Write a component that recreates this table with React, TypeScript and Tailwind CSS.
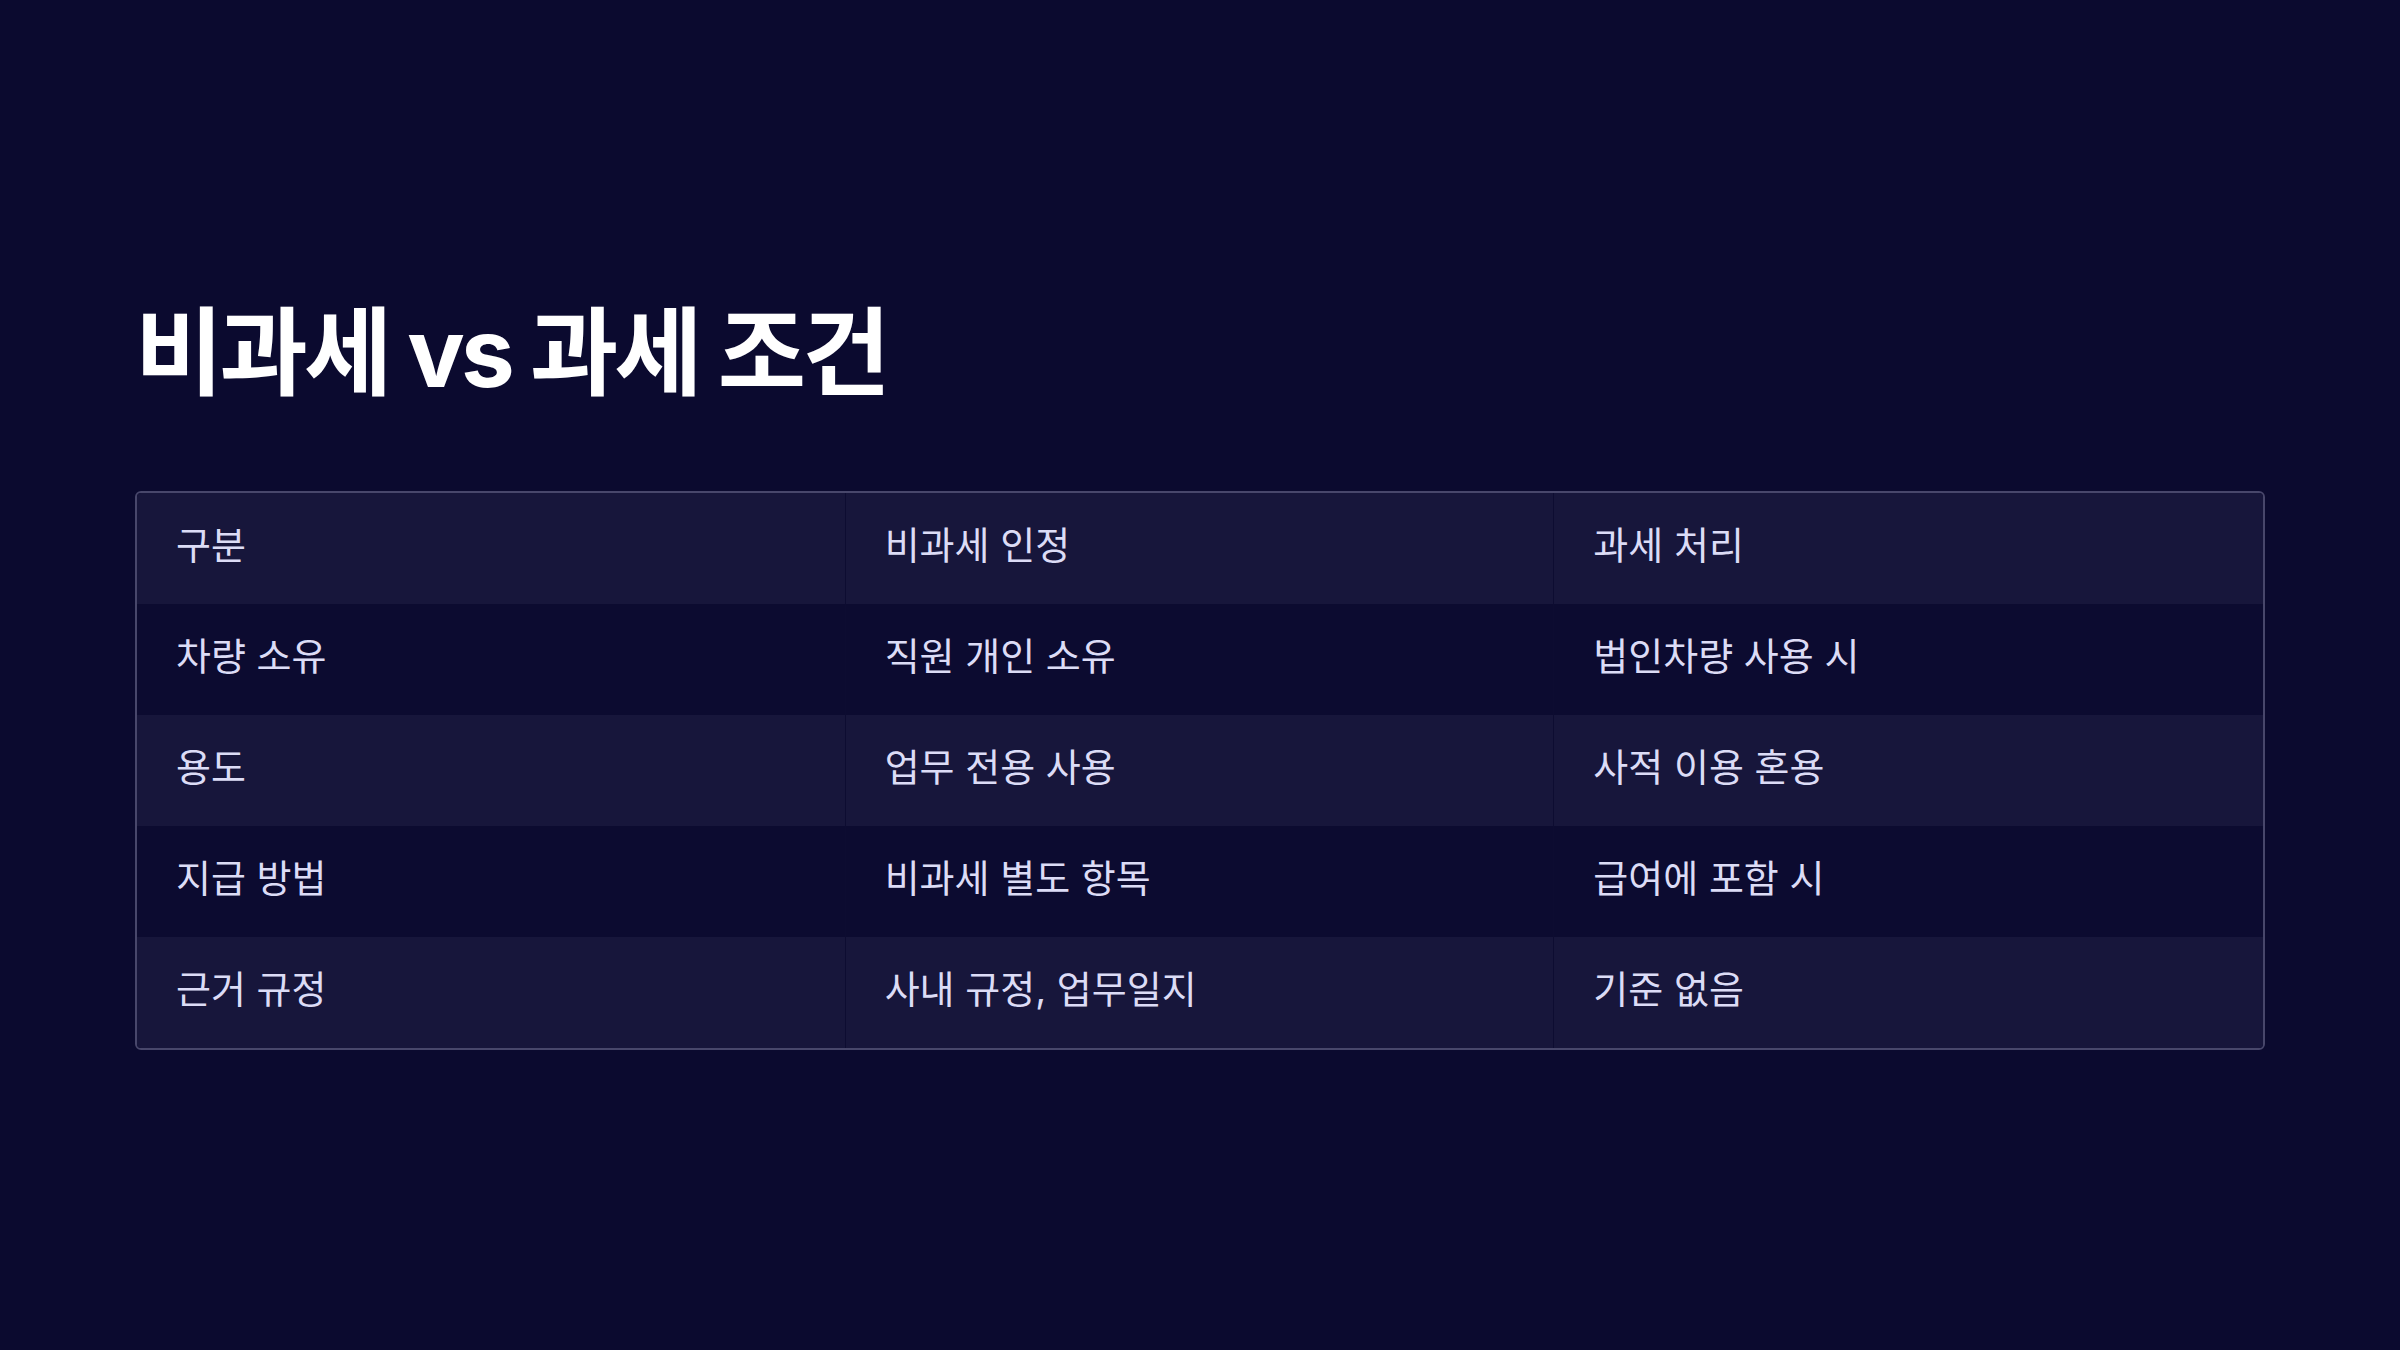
const ROWS = [
  ['구분', '비과세 인정', '과세 처리'],
  ['차량 소유', '직원 개인 소유', '법인차량 사용 시'],
  ['용도', '업무 전용 사용', '사적 이용 혼용'],
  ['지급 방법', '비과세 별도 항목', '급여에 포함 시'],
  ['근거 규정', '사내 규정, 업무일지', '기준 없음'],
]

export default function App() {
  return (
    <div
      className="w-full h-[1350px] bg-[#0b0a2f] px-[135px] pt-[288px]"
      style={{ fontFamily: 'Inter, "Noto Sans CJK KR", sans-serif' }}
    >
      <h1 className="text-white font-bold text-[96px] leading-[128px] tracking-[-0.04em]">
        비과세 vs 과세 조건
      </h1>

      <div className="mt-[75px] border-2 border-[#48476b] rounded-[6px] overflow-hidden">
        {ROWS.map((row, i) => (
          <div
            key={i}
            className={`grid grid-cols-3 h-[111px] ${i % 2 === 0 ? 'bg-[#17163b]' : 'bg-[#0c0b30]'}`}
          >
            {row.map((cell, j) => (
              <div
                key={j}
                className={`flex items-center pl-[39px] pb-[6px] text-[38px] text-[#dcdcf6] ${j < 2 ? 'border-r border-[#0d0c31]' : ''}`}
              >
                {cell}
              </div>
            ))}
          </div>
        ))}
      </div>
    </div>
  )
}
